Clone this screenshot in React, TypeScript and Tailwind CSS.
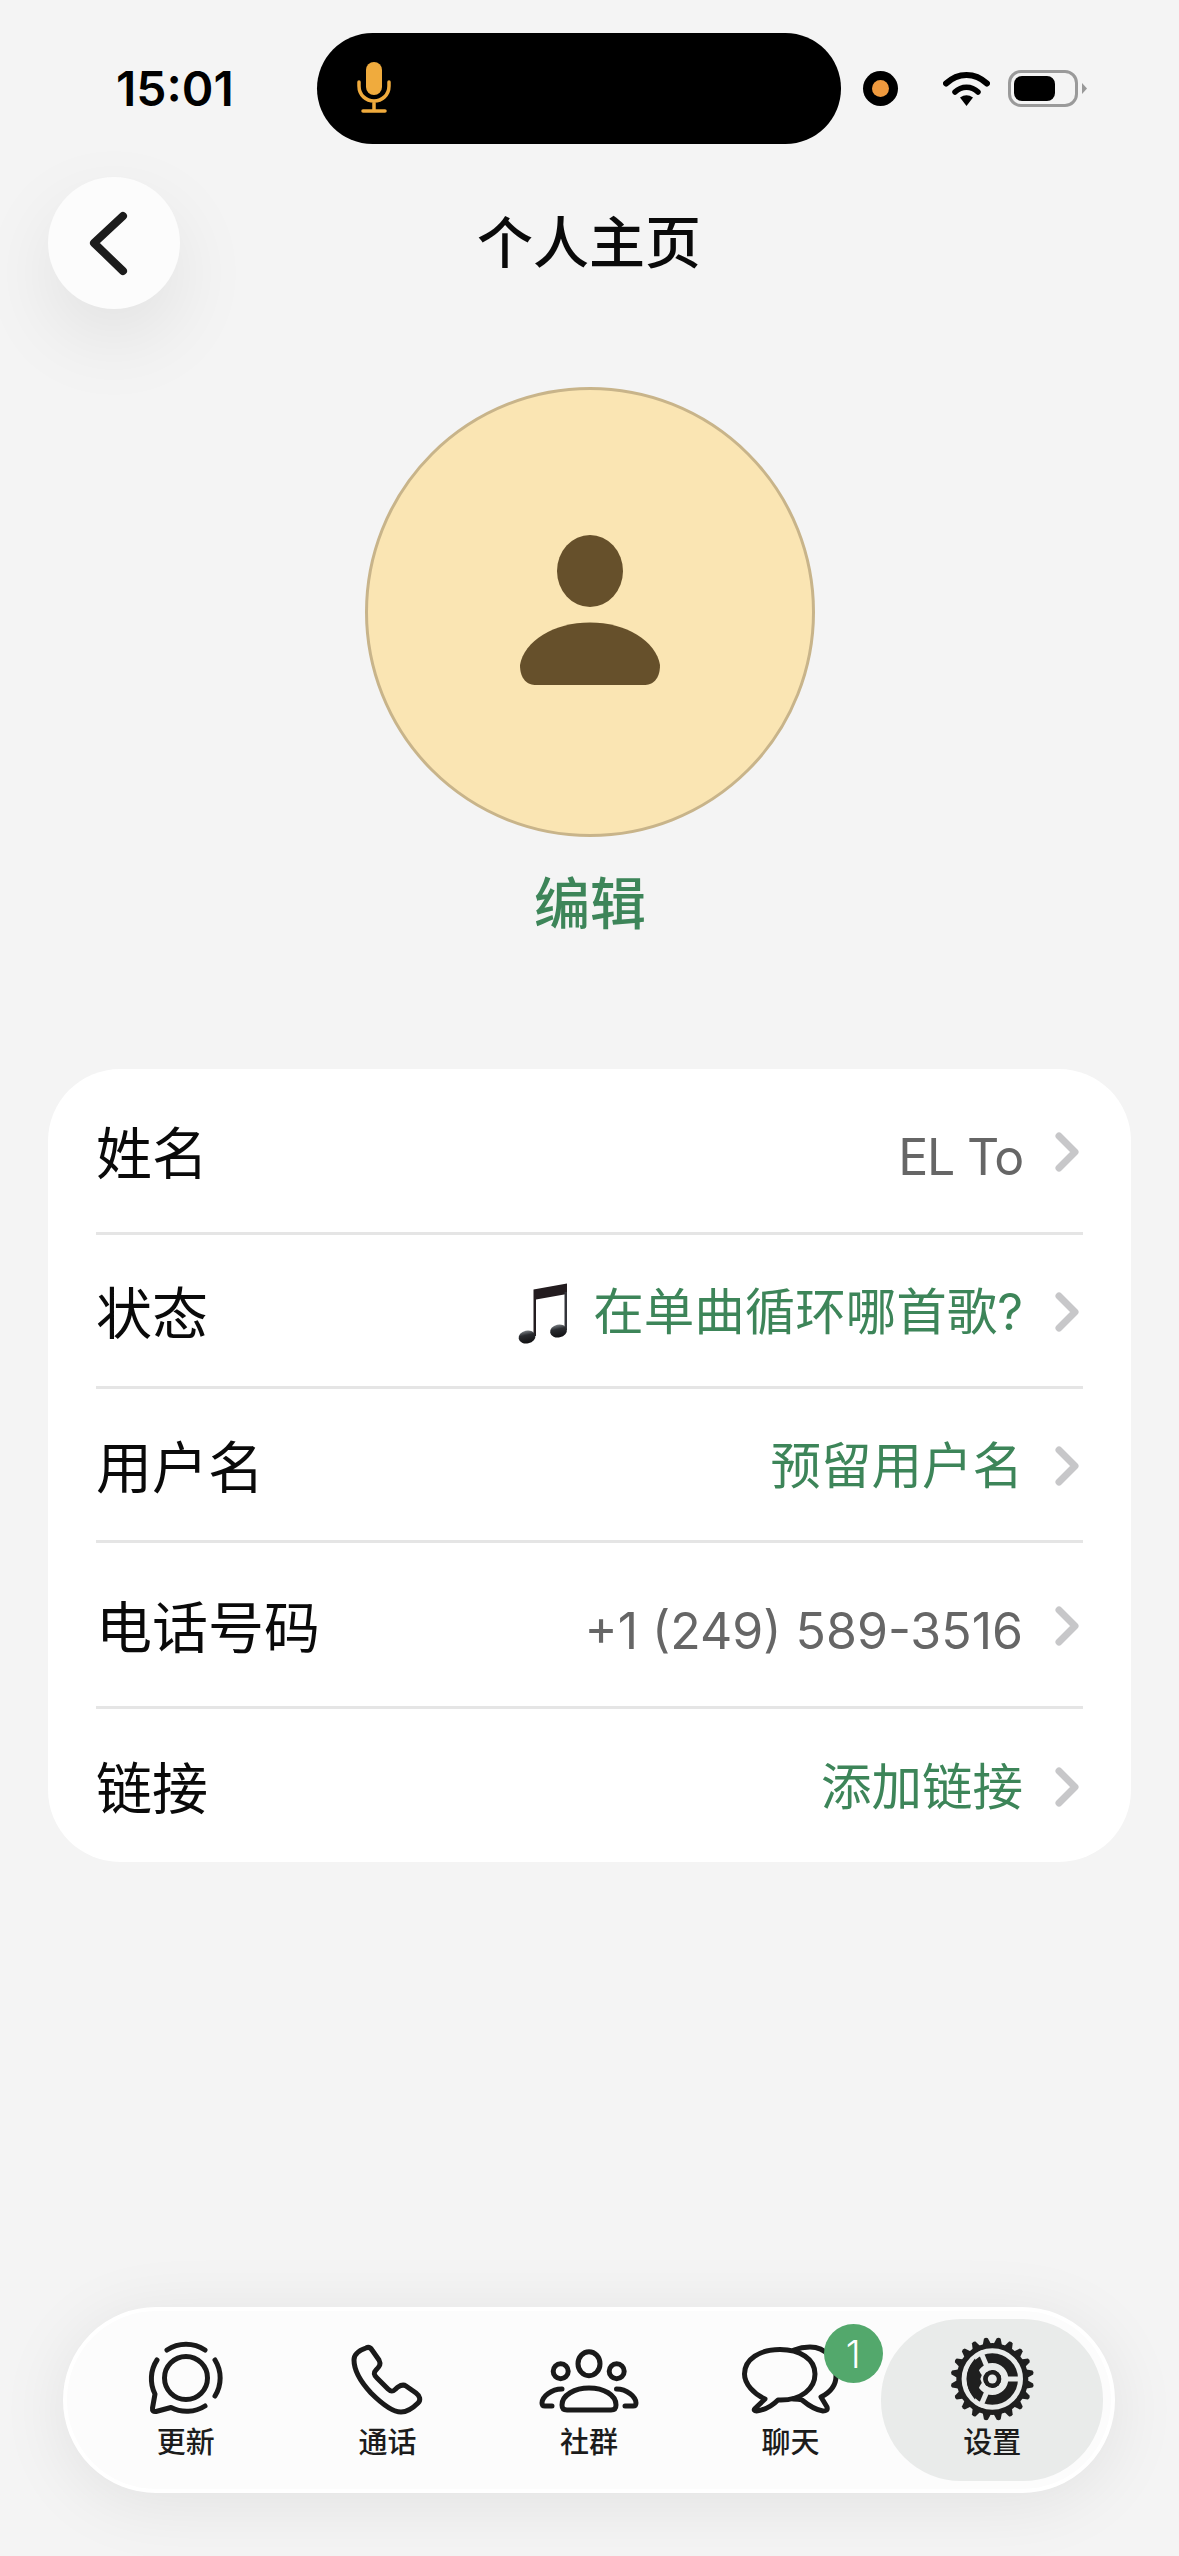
import React from "react";

const CJK = "font-['Inter','Noto_Sans_CJK_SC',sans-serif]";

function Chevron() {
  return (
    <svg width="24" height="40" viewBox="0 0 24 40" className="shrink-0">
      <path d="M4 4 L20 20 L4 36" fill="none" stroke="#c7c7c9" strokeWidth="7" strokeLinecap="round" strokeLinejoin="round" />
    </svg>
  );
}

function MusicNote() {
  return (
    <svg width="65" height="75" viewBox="0 0 65 75" className="shrink-0 -mr-[12px] -ml-[8px]">
      <defs>
        <linearGradient id="noteHead" x1="0" y1="0" x2="0" y2="1">
          <stop offset="0" stopColor="#7b8085" />
          <stop offset="0.35" stopColor="#2a2c30" />
          <stop offset="1" stopColor="#101012" />
        </linearGradient>
      </defs>
      <path d="M21.5 13.5 L55 7.5 V18 L24 23.5 V60 H21.5 Z" fill="#231c1f" />
      <path d="M52.5 16 H55 V54 H52.5 Z" fill="#33343a" />
      <ellipse cx="15" cy="61" rx="8.5" ry="6.5" transform="rotate(-12 15 61)" fill="url(#noteHead)" />
      <ellipse cx="46.5" cy="55" rx="8.5" ry="6.5" transform="rotate(-12 46.5 55)" fill="url(#noteHead)" />
    </svg>
  );
}

type RowProps = { label: string; value: string; tone: "green" | "gray"; heightClass: string; last?: boolean; emoji?: boolean; tight?: boolean };

function Row({ label, value, tone, heightClass, last, emoji, tight }: RowProps) {
  return (
    <div className={`flex items-center pt-[6px] ${heightClass} ${last ? "" : "border-b-[3px] border-[#e5e5e5]"}`}>
      <span className="text-[56px] leading-none text-[#0a0a0a]">{label}</span>
      <div className="ml-auto flex items-center">
        {emoji && <MusicNote />}
        <span
          className={`ml-[28px] leading-none ${
            tone === "green" ? "-mt-[3px] text-[50.5px] text-[#3d8559]" : "mt-[7px] text-[50px] text-[#666666]"
          } ${tight ? "tracking-[-1.2px]" : ""}`}
        >
          {value}
        </span>
      </div>
      <div className="-mt-[3px] ml-[32px] mr-[4px] flex items-center">
        <Chevron />
      </div>
    </div>
  );
}

function UpdatesIcon() {
  return (
    <svg width="80" height="80" viewBox="0 0 80 80" fill="none" stroke="#1a1a1a" strokeWidth="5" strokeLinecap="round" strokeLinejoin="round">
      <g transform="translate(0 1)">
        <circle cx="40" cy="38" r="21.5" />
        <path d="M21 10 A34 34 0 0 1 59 10" />
        <path d="M69 20 A34 34 0 0 1 69 56" />
        <path d="M11 20 A34 34 0 0 0 9 54 L6.5 68 Q6 72 10 71.5 L25 67.5 A34 34 0 0 0 59 66" />
      </g>
    </svg>
  );
}

function PhoneIcon() {
  return (
    <svg width="72" height="72" viewBox="0 0 72 72" fill="none" stroke="#1a1a1a" strokeWidth="5" strokeLinecap="round" strokeLinejoin="round">
      <path d="M15 5 C9 7 3 10 3 17 C3 27 8 37 20 50 C31 61 41 69 50 69 C56 69 61 66 67 60 C70 57 69 53 65 50 L55 43 C52 41 50 42 47 44 C44 46 42 51 37 46 L26 35 C22 31 23 29 25 27 C29 23 30 21 28 17 L21 7 C19 4 17 4 15 5 Z" />
    </svg>
  );
}

function CommunityIcon() {
  return (
    <svg width="120" height="85" viewBox="0 0 120 85" fill="none" stroke="#1a1a1a" strokeWidth="5" strokeLinecap="round" strokeLinejoin="round">
      <ellipse cx="60" cy="26.7" rx="11" ry="12" />
      <circle cx="31.7" cy="34.3" r="7.5" />
      <circle cx="87.7" cy="34.3" r="7.5" />
      <path d="M33 68 C33 58 46 51 60 51 C75 51 87 58 87 68 C87 72 85 73 82 73 H38 C35 73 33 72 33 68 Z" />
      <path d="M33 52 C22 52 13 60 13 66 C13 68 14 69 16 69 H23" />
      <path d="M87.5 52 C98 52 107 60 107 66 C107 68 106 69 104 69 H96" />
    </svg>
  );
}

function ChatIcon() {
  return (
    <svg width="105" height="100" viewBox="0 0 105 100" fill="none" stroke="#1a1a1a" strokeWidth="5" strokeLinecap="round" strokeLinejoin="round" className="-ml-[5px] -mt-[18px]">
      <path d="M58 30 C63 28 68 27 74 27 C90 27 100 40 100 56 C100 66 93 73 85 77 L91 87 C92 90 90 91 87 91 C80 90 72 85 66 80 C63 79 60 79 57 79" />
      <path d="M42 80 C66 81 79 68 79 54 C79 39 64 29.5 44 29.5 C24 29.5 8.5 39 8.5 54 C8.5 64 18 74 29 79 L19 88.5 C17.5 90 18.5 91 20.5 91 C29 90 37 85 42 80 Z" />
    </svg>
  );
}

function GearIcon() {
  const teeth = Array.from({ length: 20 }, (_, i) => i * 18 + 9);
  const light = "#e9ebea";
  return (
    <svg width="105" height="100" viewBox="0 0 105 100">
      <g transform="translate(52.3 50)">
        {teeth.map((a) => (
          <path key={a} d="M-4.5 -34 L-2 -41 Q0 -42.5 2 -41 L4.5 -34 Z" fill="#1f1f1f" transform={`rotate(${a})`} />
        ))}
        <circle r="36" fill="#1f1f1f" />
        <circle r="28.2" fill="none" stroke={light} strokeWidth="5" />
        <circle r="12.5" fill="none" stroke={light} strokeWidth="7" />
        <g stroke={light} strokeWidth="5">
          <line x1="0" y1="0" x2="29" y2="0" />
          <line x1="0" y1="0" x2="-12" y2="-28" />
          <line x1="0" y1="0" x2="-12" y2="28" />
        </g>
        <path d="M-17.3 -20.5 C-15 -13 -13 -7 -10.5 -4 L-12 0 L-10.5 4 C-13 7 -15 13 -17.3 20.5 C-22 15 -25.5 8 -25.5 0 C-25.5 -8 -22 -15 -17.3 -20.5 Z" fill="#1f1f1f" />
        <circle r="9" fill="#1f1f1f" />
        <circle r="4.5" fill={light} />
      </g>
    </svg>
  );
}

function Tab({ label, icon, active, badge }: { label: string; icon: React.ReactNode; active?: boolean; badge?: string }) {
  return (
    <div className={`relative flex flex-col items-center ${active ? "-mx-[10px] rounded-[80px] bg-[#e9ebea]" : ""}`}>
      <div className="mt-[10px] flex h-[100px] items-center justify-center">{icon}</div>
      <span className="text-[29px] font-medium leading-[28px] text-[#1c1c1c]">{label}</span>
      {badge && (
        <span className="absolute left-[134px] top-[5px] flex h-[59px] w-[59px] items-center justify-center rounded-full bg-[#53a86c] text-[38px] font-light leading-none text-white">
          {badge}
        </span>
      )}
    </div>
  );
}

export default function App() {
  return (
    <div className={`${CJK} relative flex h-[2556px] w-[1179px] flex-col overflow-hidden bg-[#f4f4f4]`}>
      {/* status bar */}
      <div className="flex h-[111px] mt-[33px] items-center pl-[116px]">
        <span className="w-[116px] whitespace-nowrap text-[48px] font-semibold leading-none text-black">15:01</span>
        <div className="ml-[85px] flex h-[111px] w-[524px] items-center rounded-[56px] bg-black pl-[40px]">
          <svg width="34" height="52" viewBox="0 0 34 52" fill="none" className="-mt-[2px]">
            <rect x="9" y="0" width="16" height="33" rx="8" fill="#f0ab3d" />
            <path d="M2 20 V24 C2 33 9 39 17 39 C25 39 32 33 32 24 V20 M17 39 V49 M6 49 H28" stroke="#f0ab3d" strokeWidth="3.5" strokeLinecap="round" />
          </svg>
        </div>
        <div className="ml-[22px] flex h-[35px] w-[35px] items-center justify-center rounded-full bg-black">
          <div className="h-[17px] w-[17px] rounded-full bg-[#f09a3e]" />
        </div>
        <svg width="47" height="35" viewBox="0 0 47 35" className="ml-[45px]" fill="none">
          <path d="M3 12.5 C15 1 32 1 44 12.5" stroke="#000" strokeWidth="6" strokeLinecap="round" />
          <path d="M12 21 C18.5 14.5 28.5 14.5 35 21" stroke="#000" strokeWidth="5.5" strokeLinecap="round" />
          <path d="M23.5 35 L17 26.5 Q23.5 22 30 26.5 Z" fill="#000" />
        </svg>
        <div className="ml-[18px] flex h-[37px] w-[70px] items-center rounded-[13px] border-[3px] border-[#9a9a9a] pl-[3px]">
          <div className="h-[25px] w-[41px] rounded-[8px] bg-black" />
        </div>
        <svg width="5" height="11" viewBox="0 0 5 11" className="ml-[4px]">
          <path d="M0 0 L5 5.5 L0 11 Z" fill="#999" />
        </svg>
      </div>

      {/* nav */}
      <div className="mt-[33px] grid h-[132px] grid-cols-[1fr_auto_1fr] items-center pl-[48px] pr-[49px]">
        <div className="flex h-[132px] w-[132px] items-center justify-center rounded-full bg-[#fcfcfc] shadow-[0_30px_80px_rgba(0,0,0,0.08)]">
          <svg width="132" height="132" viewBox="0 0 132 132" fill="none">
            <path d="M75 39 L46 66 L75 94" stroke="#1c1c1c" strokeWidth="8" strokeLinecap="round" strokeLinejoin="round" />
          </svg>
        </div>
        <h1 className="text-[56px] font-medium leading-none text-[#0a0a0a]">个人主页</h1>
        <div />
      </div>

      {/* avatar */}
      <div className="mt-[78px] flex flex-col items-center pl-[1px]">
        <div className="flex h-[450px] w-[450px] items-center justify-center rounded-full border-[3px] border-[#c8b48a] bg-[#fae5b3]">
          <svg width="140" height="150" viewBox="0 0 140 150" className="-mt-[4px]">
            <ellipse cx="70" cy="36" rx="33" ry="36" fill="#66502b" />
            <path d="M0 130 C4 106 34 87.5 70 87.5 C106 87.5 136 106 140 130 C140 145 132 150 124 150 H16 C8 150 0 145 0 130 Z" fill="#66502b" />
          </svg>
        </div>
        <span className="mt-[37px] text-[56px] font-medium leading-[60px] text-[#3d8559]">编辑</span>
      </div>

      {/* card */}
      <div className="ml-[48px] mt-[135px] w-[1083px] rounded-[72px] bg-white px-[48px]">
        <Row label="姓名" value="EL To" tone="gray" heightClass="h-[166px]" tight />
        <Row label="状态" value="在单曲循环哪首歌?" tone="green" heightClass="h-[154px]" emoji />
        <Row label="用户名" value="预留用户名" tone="green" heightClass="h-[154px]" />
        <Row label="电话号码" value="+1 (249) 589-3516" tone="gray" heightClass="h-[166px]" />
        <Row label="链接" value="添加链接" tone="green" heightClass="h-[153px]" last />
      </div>

      {/* tab bar */}
      <div className="ml-[63px] mt-auto mb-[63px] h-[186px] w-[1052px] rounded-[93px] border-[4px] border-white bg-[#fcfcfc] py-[8px] pl-[18px] pr-[18px] shadow-[0_10px_70px_rgba(0,0,0,0.08)]">
        <div className="grid h-full grid-cols-5">
          <Tab label="更新" icon={<UpdatesIcon />} />
          <Tab label="通话" icon={<PhoneIcon />} />
          <Tab label="社群" icon={<CommunityIcon />} />
          <Tab label="聊天" icon={<ChatIcon />} badge="1" />
          <Tab label="设置" icon={<GearIcon />} active />
        </div>
      </div>
    </div>
  );
}
